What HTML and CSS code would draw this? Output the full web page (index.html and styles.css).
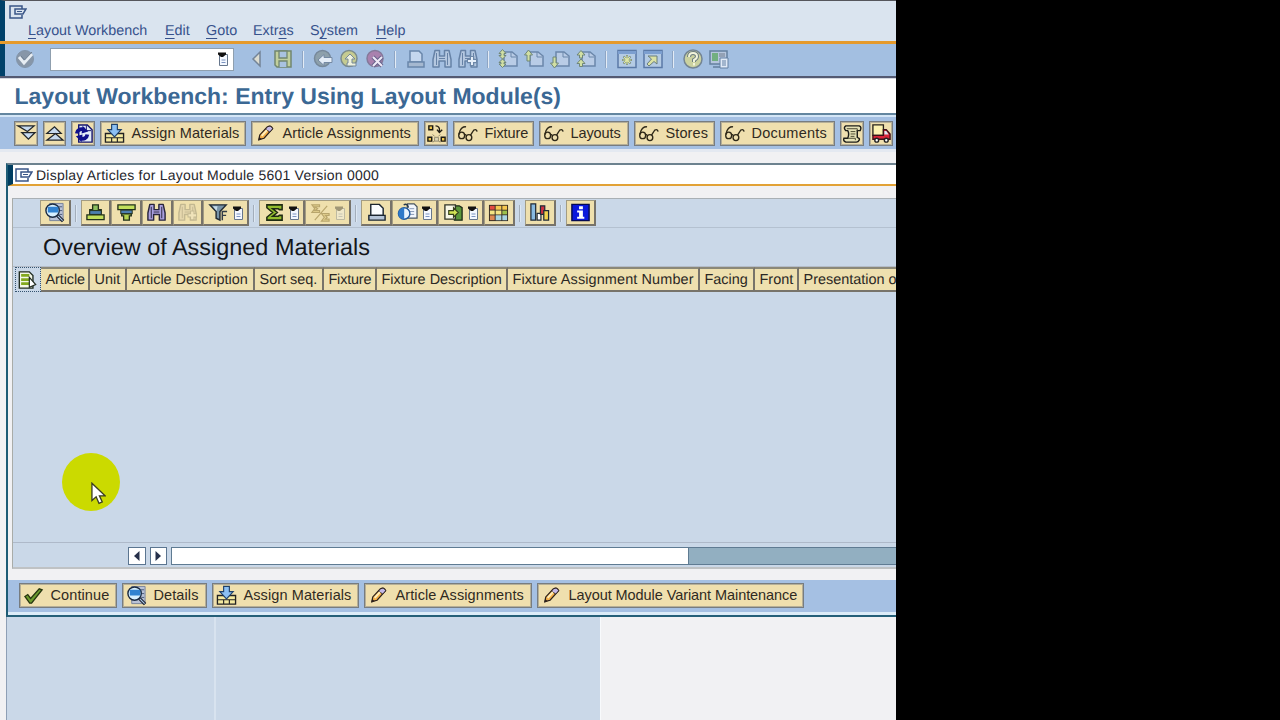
FILE: index.html
```html
<!DOCTYPE html>
<html lang="en">

<head>
    <meta charset="UTF-8">
    <meta name="viewport" content="width=device-width, initial-scale=1.0">
    <link rel="stylesheet" href="styles.css">
    <title>Layout Workbench</title>
</head>

<body>
    <!-- icons that are used more than once -->
    <svg class="defs">
        <symbol id="window" viewBox="0 0 18 14">
            <path d="M13 4V1H1v12h12v-3M6 4h11l-3 5H6z" fill="none" stroke="currentColor" stroke-width="1.5" />
            <path d="M8 6.5h5" stroke="currentColor" />
        </symbol>
        <symbol id="list" viewBox="0 0 12 14">
            <path d="M2.500 2.500h8v11h-8z" fill="#f4f8ff" stroke="#66768c" />
            <path d="M4.500 8h4M4.500 10.500h4" stroke="#7b93c0" />
            <path d="M1 .5h8v2L6 5H4L1 2.500z" fill="#111" />
        </symbol>
        <symbol id="assign" viewBox="0 0 22 22">
            <path d="M1.500 11h19v9h-19z" fill="#f4e9a0" stroke="#222" stroke-width="1.400" />
            <path d="M2 15.500h18M8 15v5M14 15v5" stroke="#222" stroke-width="1.200" />
            <path d="M8 1.500h6V7h4l-7 7.500L4 7h4z" fill="#8cc0f4" stroke="#1e4069" stroke-width="1.200" />
        </symbol>
        <symbol id="pencil" viewBox="0 0 22 22">
            <path d="M4 17.500l1-5L13 4q4-2 5.500 2L9.500 16z" fill="#f5b04a" stroke="#2b211c" stroke-width="1.300" />
            <path d="M11 6.500L13 4q4-2 5.500 2l-3 3.500z" fill="#c3b8e8" stroke="#2b211c" />
            <path d="M7 13.500l5.500-6" stroke="#fff0bd" stroke-width="2" />
            <path d="M3.500 18.500l.8-4 2.700 2.500z" fill="#2b211c" />
        </symbol>
        <symbol id="glasses" viewBox="0 0 22 22">
            <g fill="none" stroke="#2e2818" stroke-width="1.400">
                <path d="M9.500 4Q5 3.500 3 8.500L2 12M21 9q-.5-3-3.500-1.500L14 13" />
                <ellipse cx="4.900" cy="13" rx="3.100" ry="3.400" />
                <ellipse cx="12.500" cy="15.300" rx="3" ry="3.200" />
                <path d="M7.500 12q1.500-.5 2.500 1.500" />
            </g>
        </symbol>
        <symbol id="magnify" viewBox="0 0 22 22">
            <path d="M6 1.500h14v18H6z" fill="#b9c2d6" stroke="#77829a" />
            <path d="M15 5h4M16 9h3M16 13h3" stroke="#4a5a7a" />
            <circle cx="9" cy="9" r="7" fill="#d6efff" stroke="#1b2b42" stroke-width="1.500" />
            <path d="M4 5h11v6H4z" fill="#3182d0" />
            <path d="M14 14l6 6" stroke="#1b2030" stroke-width="3.500" />
            <path d="M14.500 14.500l5 5" stroke="#a9c9e9" stroke-width="1.200" />
        </symbol>
        <symbol id="binoculars" viewBox="0 0 22 22">
            <path d="M4 2.500h4.500V8h5V2.500H18l2 9V19h-6v-6H8v6H2v-7.500z" fill="var(--fill)" stroke="var(--line)" stroke-width="1.500" stroke-linejoin="round" />
            <path d="M5.500 5v12M16.500 5v12M8 10.500h6" stroke="var(--line)" />
        </symbol>
        <symbol id="page" viewBox="0 0 22 22">
            <path d="M7 4h8l5 4v10H7z" fill="#b9cce6" stroke="#6b87aa" stroke-width="1.500" />
            <path d="M14 4v5h5" fill="none" stroke="#6b87aa" />
        </symbol>
    </svg>

    <div class="app">
        <div class="menu">
            <svg class="window-icon"><use href="#window" /></svg>
            <div class="menu-items">
                <span class="m1"><u>L</u>ayout Workbench</span>
                <span class="m2"><u>E</u>dit</span>
                <span class="m3"><u>G</u>oto</span>
                <span class="m4">Extr<u>a</u>s</span>
                <span class="m5">S<u>y</u>stem</span>
                <span><u>H</u>elp</span>
            </div>
        </div>

        <div class="standard">
            <svg class="ok" viewBox="0 0 22 22">
                <circle cx="11" cy="11" r="8.500" fill="#8796a8" stroke="#8294a9" />
                <path d="M5 9l5 6 8-9" fill="none" stroke="#e7edf3" stroke-width="3" />
                <path d="M7 8l3.500 4L18 4" fill="none" stroke="#6e7e90" />
            </svg>
            <div class="command"><svg class="list"><use href="#list" /></svg></div>
            <svg class="std" viewBox="0 0 22 22">
                <path d="M14 4v14L7 11z" fill="#dcdcd0" stroke="#748497" stroke-width="1.500" />
            </svg>
            <svg class="std" viewBox="0 0 22 22">
                <path d="M3 3h16v16H5l-2-2z" fill="#c1cf9c" stroke="#72876f" stroke-width="1.500" />
                <path d="M7 3h8v7H7zM7 19v-6h8v6" fill="#a9c2e0" stroke="#72876f" stroke-width="1.300" />
            </svg>
            <i class="sep"></i>
            <svg class="std" viewBox="0 0 22 22">
                <circle cx="10.500" cy="10.500" r="8" fill="#8da0ab" stroke="#76889a" stroke-width="1.500" />
                <path d="M6 12l6-5.500v3h8v5h-8v3z" fill="#e4edf7" stroke="#7489a3" />
            </svg>
            <svg class="std" viewBox="0 0 22 22">
                <circle cx="11" cy="10.500" r="8" fill="#c5cb91" stroke="#7b8b8b" stroke-width="1.500" />
                <path d="M7 11l5-5 5 5h-3v4h4v3H9v-3h1v-4z" fill="#eef1dc" stroke="#75889a" />
            </svg>
            <svg class="std" viewBox="0 0 22 22">
                <circle cx="11" cy="10.500" r="8" fill="#a981ae" stroke="#84799a" stroke-width="1.500" />
                <path d="M9 9l9 9M18 9l-9 9" stroke="#66628b" stroke-width="4" />
                <path d="M9 9l9 9M18 9l-9 9" stroke="#efe9f6" stroke-width="2" />
            </svg>
            <i class="sep"></i>
            <svg class="std" viewBox="0 0 22 22">
                <path d="M5 3h9l3 3v8H5z" fill="#c5d7ee" stroke="#6986aa" stroke-width="1.500" />
                <path d="M3 14h16v5H3z" fill="#a5b8d0" stroke="#6986aa" stroke-width="1.500" />
            </svg>
            <svg class="std find"><use href="#binoculars" /></svg>
            <svg class="std find" viewBox="0 0 22 22">
                <use href="#binoculars" />
                <path d="M15 8v10M10 13h10" stroke="#6c87a8" stroke-width="4.500" />
                <path d="M15 9v8M11 13h8" stroke="#e6eff9" stroke-width="2" />
            </svg>
            <i class="sep"></i>
            <svg class="std pages" viewBox="0 0 22 22">
                <use href="#page" />
                <path d="M5.500 1.500l3.500 4H7v2h2l-3.500 3.500L2 7.500h2v-2H2zM5.500 11l3.500 3.500H7v1.500h2l-3.500 3.500L2 16h2v-1.500H2z" />
            </svg>
            <svg class="std pages" viewBox="0 0 22 22">
                <use href="#page" />
                <path d="M5.500 2l4 5h-2.500v6h-3V7H1.500z" />
            </svg>
            <svg class="std pages" viewBox="0 0 22 22">
                <use href="#page" />
                <path d="M5.500 20l4-5h-2.500V9h-3v6H1.500z" />
            </svg>
            <svg class="std pages" viewBox="0 0 22 22">
                <use href="#page" />
                <path d="M6 2.500l4 4.500H7.500v3h-3V7H2zM6 11l4 4.500H7.500v3h-3v-3H2z" />
            </svg>
            <i class="sep"></i>
            <svg class="std" viewBox="0 0 22 22">
                <path d="M2 2.500h18v17H2z" fill="#b4cbe4" stroke="#5b7aa7" stroke-width="1.500" />
                <path d="M2 4.500h18" stroke="#7c9fd0" stroke-width="3" />
                <path d="M11 7v10M6 12h10M7.500 8.500l7 7M14.500 8.500l-7 7" stroke="#6c8075" stroke-width="2" />
                <path d="M11 7.500v9M6.500 12h9M8 9l6 6M14 9l-6 6" stroke="#e0e8a4" stroke-width="1.200" />
            </svg>
            <svg class="std" viewBox="0 0 22 22">
                <path d="M2 2.500h18v17H2z" fill="#b4cbe4" stroke="#5b7aa7" stroke-width="1.500" />
                <path d="M2 4.500h18" stroke="#7c9fd0" stroke-width="3" />
                <path d="M6 8h9v8l-3-2.500L7 18l-2-2 4.500-5z" fill="#dce2a4" stroke="#6b7e7c" />
            </svg>
            <i class="sep"></i>
            <svg class="std" viewBox="0 0 22 22">
                <circle cx="11" cy="11" r="9" fill="#cbd2a0" stroke="#748593" stroke-width="1.500" />
                <path d="M7 9q0-4 4-4t4 3.500q0 2-3 3.500v2" fill="none" stroke="#6c7d80" stroke-width="4" />
                <path d="M7 9q0-4 4-4t4 3.500q0 2-3 3.500v2M12 15v2.500" fill="none" stroke="#f2f4da" stroke-width="2" />
            </svg>
            <svg class="std" viewBox="0 0 22 22">
                <path d="M2 3h17v13H2zM5 19h9" fill="#b6c6dd" stroke="#64809f" stroke-width="1.500" />
                <path d="M4 5h6v8H4z" fill="#72af80" />
                <path d="M11 5h6v4h-6z" fill="#93a1b5" />
                <path d="M12 10h8v10h-8z" fill="#dfe9f6" stroke="#6581a4" />
                <path d="M14 13h4M14 15h4M14 17h4" stroke="#6581a4" />
            </svg>
        </div>

        <h1>Layout Workbench: Entry Using Layout Module(s)</h1>

        <div class="toolbar">
            <button class="btn square">
                <svg viewBox="0 0 22 22"><path d="M2 3h17l-7 6zM6 10h14l-7 7z" fill="#c6daf0" stroke="#22262a" stroke-width="1.300" /></svg>
            </button>
            <button class="btn square narrow">
                <svg viewBox="0 0 22 22"><path d="M3 11h15l-7-7zM3 18h17l-8-7z" fill="#c6daf0" stroke="#22262a" stroke-width="1.300" /></svg>
            </button>
            <button class="btn square">
                <svg viewBox="0 0 22 22">
                    <path d="M6 2h9l5 5v13H6z" fill="#e3ecf8" stroke="#17176f" stroke-width="1.500" />
                    <path d="M14 2.500V8h5" fill="none" stroke="#17176f" />
                    <path d="M4 11q1-6 8-4M15 12q-1 6-8 4" fill="none" stroke="#10108c" stroke-width="4" />
                    <path d="M10 3l6 6-7 2zM9 20l-6-6 7-2z" fill="#10108c" />
                </svg>
            </button>
            <button class="btn w146"><svg><use href="#assign" /></svg>Assign Materials</button>
            <button class="btn w168"><svg><use href="#pencil" /></svg>Article Assignments</button>
            <button class="btn square">
                <svg viewBox="0 0 22 22">
                    <path d="M3 3h4v4H3zM2 15h4v4H2zM16 15h4v4h-4z" fill="#f1c94d" stroke="#1d1a12" stroke-width="1.500" />
                    <path d="M9 15h4v4H9z" fill="#ddd6b5" stroke="#928b70" />
                    <path d="M7 12l2 2M15 12l-2 2M7 20l2-1M15 20l-2-1" stroke="#888164" />
                    <path d="M10 3q5 0 4 6M11.500 7l2.500 3 3-3" fill="none" stroke="#1d1a12" stroke-width="1.400" />
                </svg>
            </button>
            <button class="btn tight w81"><svg><use href="#glasses" /></svg>Fixture</button>
            <button class="btn tight w90"><svg><use href="#glasses" /></svg>Layouts</button>
            <button class="btn w81"><svg><use href="#glasses" /></svg>Stores</button>
            <button class="btn w115"><svg><use href="#glasses" /></svg><span class="wide">Documents</span></button>
            <button class="btn square">
                <svg viewBox="0 0 22 22">
                    <path d="M4 3h14q3 1 1 5h-3v7q3 1 2 3-1 2-3 2H4q-3-1-2-4h4q2-5 0-8H4q-3-3 0-5z" fill="#e6e2b7" stroke="#1c1c18" stroke-width="1.500" />
                    <path d="M5 6h11v2M6 16h8v2M9 9h5M9 11.500h5M9 14h4" fill="none" stroke="#47452f" />
                </svg>
            </button>
            <button class="btn square">
                <svg viewBox="0 0 22 22">
                    <path d="M2 2h11v11H2z" fill="#fcf2b2" stroke="#26221b" stroke-width="1.400" />
                    <path d="M13 7h3l4 4.500V17H2v-4h11z" fill="#d92439" stroke="#3c1118" stroke-width="1.400" />
                    <path d="M14 8.500h2l2.500 3.500H14z" fill="#dce9f5" />
                    <circle cx="6" cy="18" r="2" fill="#fff" stroke="#222" stroke-width="1.500" />
                    <circle cx="16" cy="18" r="2" fill="#fff" stroke="#222" stroke-width="1.500" />
                </svg>
            </button>
        </div>

        <div class="dialog">
            <div class="dialog-title">
                <svg class="window-icon"><use href="#window" /></svg>
                <span>Display Articles for Layout Module 5601 Version 0000</span>
            </div>

            <div class="grid">
                <div class="grid-tools">
                    <button class="tool"><svg><use href="#magnify" /></svg></button>
                    <i class="sep"></i>
                    <button class="tool">
                        <svg viewBox="0 0 22 22">
                            <path d="M8 3h6v5h3v5H5V8h3z" fill="#8cbf5e" stroke="#22301c" stroke-width="1.400" />
                            <path d="M5 9h12v4H5z" fill="#4d7fb0" stroke="#22301c" />
                            <path d="M2 13.500h18v5H2z" fill="#c2df5b" stroke="#22301c" stroke-width="1.400" />
                        </svg>
                    </button>
                    <button class="tool">
                        <svg viewBox="0 0 22 22">
                            <path d="M2 3h18v5H2z" fill="#c2df5b" stroke="#22301c" stroke-width="1.400" />
                            <path d="M5 8.500h12v4H5z" fill="#4d7fb0" stroke="#22301c" />
                            <path d="M6 12.500h10v2h-2V19H8v-4.500H6z" fill="#b3d450" stroke="#22301c" stroke-width="1.400" />
                        </svg>
                    </button>
                    <button class="tool"><svg class="find-on"><use href="#binoculars" /></svg></button>
                    <button class="tool">
                        <svg class="find-off" viewBox="0 0 22 22">
                            <use href="#binoculars" />
                            <path d="M16 9v10M11 14h10" stroke="#c3b891" stroke-width="4.500" />
                            <path d="M16 10v8M12 14h8" stroke="#f0e3ba" stroke-width="2.500" />
                        </svg>
                    </button>
                    <button class="tool drop">
                        <svg viewBox="0 0 22 22">
                            <path d="M2 3h17l-6.500 7v9l-4-2v-7z" fill="#7894a8" stroke="#222b35" stroke-width="1.500" />
                            <path d="M5 4.500h5l-1 5" fill="#c7dcea" />
                            <path d="M15 19V10h5M15 14h4" fill="none" stroke="#333e48" stroke-width="1.500" />
                        </svg>
                        <svg class="list"><use href="#list" /></svg>
                    </button>
                    <i class="sep"></i>
                    <button class="tool drop">
                        <svg viewBox="0 0 22 22"><path d="M3 3h16v5h-3l-1-1H9l5 4-5 4h6l1-1h3v5H3v-3l6-5-6-5z" fill="#93bd2e" stroke="#1f2b12" stroke-width="1.600" /></svg>
                        <svg class="list"><use href="#list" /></svg>
                    </button>
                    <button class="tool drop off">
                        <svg viewBox="0 0 22 22"><path d="M2 3h8v2H5l3 2-3 2h5v2H2l3-4zM12 12h8v2h-4l2 2-2 2h4v2h-8l3-4zM5 19L18 4" fill="#e8d693" stroke="#b8a56c" stroke-width="1.200" /></svg>
                        <svg class="list"><use href="#list" /></svg>
                    </button>
                    <i class="sep"></i>
                    <button class="tool">
                        <svg viewBox="0 0 22 22">
                            <path d="M5 2.500h9l4 4V14H5z" fill="#fafdff" stroke="#1b2630" stroke-width="1.500" />
                            <path d="M3 14h17v5H3z" fill="#b5c5d8" stroke="#1b2630" stroke-width="1.500" />
                        </svg>
                    </button>
                    <button class="tool drop">
                        <svg viewBox="0 0 22 22">
                            <path d="M11 2h7l3 3v12H10z" fill="#f1f6fc" stroke="#4a5662" stroke-width="1.300" />
                            <path d="M13 7h5M13 10h5M13 13h5" stroke="#8496b5" />
                            <circle cx="7.500" cy="12" r="6" fill="#e9f5ff" stroke="#225a9d" stroke-width="1.500" />
                            <path d="M7.500 6a6 6 0 0 0 0 12z" fill="#2f7ac9" />
                            <path d="M7 3q4-2 5 3" fill="none" stroke="#26384a" stroke-width="1.500" />
                        </svg>
                        <svg class="list"><use href="#list" /></svg>
                    </button>
                    <button class="tool drop">
                        <svg viewBox="0 0 22 22">
                            <path d="M12 4h5l3 2v13h-8z" fill="#5a973b" stroke="#1c2b18" stroke-width="1.400" />
                            <path d="M2 3h11v15H2z" fill="#f7f7e7" stroke="#303427" stroke-width="1.400" />
                            <path d="M6 9h5V6l5 5-5 5v-3H6z" fill="#d2e255" stroke="#35401b" stroke-width="1.200" />
                        </svg>
                        <svg class="list"><use href="#list" /></svg>
                    </button>
                    <button class="tool">
                        <svg viewBox="0 0 22 22">
                            <path d="M1 3h20v17H1z" fill="#332b23" />
                            <path d="M2 4h5v4H2z" fill="#e34a42" />
                            <path d="M8 4h6v4H8zM15 4h5v4h-5z" fill="#f6c851" />
                            <path d="M2 9h5v4H2zM8 9h6v4H8z" fill="#f4e583" />
                            <path d="M15 9h5v4h-5z" fill="#9bc04b" />
                            <path d="M2 14h5v5H2z" fill="#dd8a53" />
                            <path d="M8 14h6v5H8zM15 14h5v5h-5z" fill="#a8d5e1" />
                        </svg>
                    </button>
                    <i class="sep"></i>
                    <button class="tool">
                        <svg viewBox="0 0 22 22">
                            <path d="M2 2h5v17H2z" fill="#87b9e0" stroke="#1f2b38" stroke-width="1.300" />
                            <path d="M8.500 12h4v7h-4z" fill="#fff" stroke="#1f2b38" stroke-width="1.300" />
                            <path d="M12 4h4.500v9H12z" fill="#cc3040" stroke="#1f2b38" stroke-width="1.300" />
                            <path d="M15.500 9h5v10h-5z" fill="#f2d34d" stroke="#1f2b38" stroke-width="1.300" />
                        </svg>
                    </button>
                    <i class="sep"></i>
                    <button class="tool">
                        <svg viewBox="0 0 22 22">
                            <path d="M2 2.500h18v17H2z" fill="#0b18dc" stroke="#050a52" stroke-width="1.500" />
                            <path d="M9.500 4.500h4v3h-4zM7.500 9h6v6.500H15v2H7.500v-2h2V11h-2z" fill="#fff" />
                        </svg>
                    </button>
                </div>

                <h2>Overview of Assigned Materials</h2>

                <div class="columns">
                    <div class="select-all">
                        <svg viewBox="0 0 22 22">
                            <path d="M2 2h11l4 4v14H2z" fill="#f4f8e8" stroke="#222c22" stroke-width="1.500" />
                            <path d="M4 6h9M4 10.500h10M4 15h10" stroke="#82a91f" stroke-width="3" />
                            <path d="M13 8v11l7-3z" fill="#fff" stroke="#222c22" stroke-width="1.300" />
                        </svg>
                    </div>
                    <div class="col c1">Article</div>
                    <div class="col c2">Unit</div>
                    <div class="col c3">Article Description</div>
                    <div class="col c4">Sort seq.</div>
                    <div class="col c5">Fixture</div>
                    <div class="col c6">Fixture Description</div>
                    <div class="col c7">Fixture Assignment Number</div>
                    <div class="col c8">Facing</div>
                    <div class="col c9">Front</div>
                    <div class="col c10">Presentation o</div>
                </div>

                <div class="rows"></div>

                <div class="scroll">
                    <div class="arrow"><svg viewBox="0 0 8 10"><path d="M6.500 0v10L1 5z" /></svg></div>
                    <div class="arrow"><svg viewBox="0 0 8 10"><path d="M1.500 0v10L7 5z" /></svg></div>
                    <div class="track"><div class="thumb"></div></div>
                </div>
            </div>

            <div class="actions">
                <button class="btn w98">
                    <svg viewBox="0 0 22 22"><path d="M2 12l3-2 3 4 9-10 3 1L9 19H7z" fill="#6c9c2f" stroke="#26350f" stroke-width="1.400" /></svg>Continue
                </button>
                <button class="btn w85"><svg><use href="#magnify" /></svg>Details</button>
                <button class="btn w147"><svg><use href="#assign" /></svg>Assign Materials</button>
                <button class="btn w168"><svg><use href="#pencil" /></svg>Article Assignments</button>
                <button class="btn w267"><svg><use href="#pencil" /></svg>Layout Module Variant Maintenance</button>
            </div>
        </div>

        <div class="behind">
            <div class="tree"></div>
            <div class="detail"></div>
        </div>

        <div class="pointer">
            <svg viewBox="0 0 16 24"><path d="M1 1v18.500l4.500-4 3 7 3.500-1.500-3-6.500h6z" fill="#fff" stroke="#3b3f22" stroke-width="1.400" /></svg>
        </div>
    </div>
</body>

</html>
```

FILE: styles.css
```css
* {
    margin: 0;
    padding: 0;
    box-sizing: border-box;
}

body {
    background: #000;
    height: 720px;
    overflow: hidden;
    font-family: "Liberation Sans", Arial, sans-serif;
    font-size: 14.5px;
    color: #2b2824;
    text-rendering: geometricPrecision;
}

svg {
    display: block;
    flex: none;
}

.defs {
    display: none;
}

.app {
    position: relative;
    display: flex;
    flex-direction: column;
    width: 896px;
    height: 720px;
    overflow: hidden;
    background: #f1f1f3;
    white-space: nowrap;
}

/* menu bar */

.menu {
    height: 41px;
    padding: 4px 0 0 4px;
    border-top: 1px solid #55565c;
    border-left: 5px solid #00416a;
    background: #dae4ef;
    color: #37528c;
}

.window-icon {
    width: 18px;
    height: 14px;
    color: #3a5688;
}

.menu-items {
    display: flex;
    padding-left: 19px;
    font-size: 14.35px;
    line-height: 24px;
}

.menu-items u {
    text-underline-offset: 3px;
}

.m1 {
    width: 137px;
}

.m2 {
    width: 41px;
}

.m3 {
    width: 47px;
}

.m4 {
    width: 57px;
}

.m5 {
    width: 66px;
}

/* standard toolbar */

.standard {
    display: flex;
    align-items: center;
    height: 37px;
    padding-bottom: 2px;
    border-top: 3px solid #e59a2c;
    border-bottom: 2px solid #545a72;
    background: linear-gradient(90deg, #00416a 5px, #a3bfe1 5px);
}

.ok {
    width: 22px;
    height: 22px;
    margin: 0 14px 0 14px;
}

.command {
    display: flex;
    align-items: center;
    justify-content: flex-end;
    width: 184px;
    height: 23px;
    margin-right: 9.5px;
    padding-right: 4px;
    border: 1px solid #8f9fae;
    background: #fff;
}

.list {
    width: 12px;
    height: 14px;
}

.std {
    width: 22px;
    height: 22px;
    margin: 0 2px;
}

.find {
    --fill: #b5c8e0;
    --line: #6682a6;
}

.pages > path {
    fill: #d1dfa3;
    stroke: #6f8679;
}

.sep {
    flex: none;
    width: 2px;
    height: 17px;
    margin: 0 6px;
    background: #e3ebf5;
    border-left: 1px solid #8ea5c4;
}

.standard .sep {
    margin-right: 6.5px;
}

h1 {
    height: 37px;
    padding-left: 14.5px;
    border-top: 1px solid #d5d8e0;
    border-bottom: 2px solid #6386a0;
    background: #fff;
    color: #3b6894;
    font-size: 23px;
    line-height: 34px;
}

/* application toolbar */

.toolbar {
    display: flex;
    gap: 5px;
    height: 37px;
    padding: 4px 0 0 14px;
    border-top: 2px solid #d4e6f7;
    border-bottom: 3px solid #e4e9f1;
    background: #a5c0e3;
}

.btn {
    display: flex;
    flex: none;
    align-items: center;
    gap: 7px;
    height: 25px;
    padding: 0 0 1px 2.5px;
    border: 1px solid #777c80;
    box-shadow: inset 0 0 0 1px #b5af98;
    background: #efdfae;
    color: #2f2a22;
    font: inherit;
    letter-spacing: 0.1px;
}

.btn svg {
    width: 21px;
    height: 21px;
}

.square {
    justify-content: center;
    width: 24px;
    padding-left: 0;
}

.narrow {
    width: 23px;
}

.tight {
    letter-spacing: -0.1px;
}

.wide {
    letter-spacing: 0.25px;
}

.w81 {
    width: 81px;
}

.w85 {
    width: 85px;
}

.w90 {
    width: 90px;
}

.w98 {
    width: 98px;
}

.w115 {
    width: 115px;
}

.w146 {
    width: 146px;
}

.w147 {
    width: 147px;
}

.w168 {
    width: 168px;
}

.w267 {
    width: 267px;
    letter-spacing: -0.07px;
}

/* dialog */

.dialog {
    display: flex;
    flex-direction: column;
    height: 454px;
    margin: 11px 0 0 6px;
    border-top: 2px solid #6d828f;
    border-bottom: 2px solid #245f78;
    border-left: 2px solid #1d5c76;
}

.dialog-title {
    display: flex;
    align-items: center;
    gap: 3px;
    height: 21px;
    padding-left: 2px;
    border-bottom: 2px solid #e2a236;
    border-left: 5px solid #003d60;
    background: #fff;
    font-size: 14px;
    letter-spacing: 0.22px;
    color: #26262c;
}

.grid {
    display: flex;
    flex-direction: column;
    height: 371px;
    margin: 12px 0 0 4px;
    border-top: 1px solid #a9b0b5;
    border-bottom: 2px solid #bfc2c4;
    border-left: 1px solid #a9aca8;
    background: #cad8e8;
}

.grid-tools {
    display: flex;
    height: 29px;
    padding: 1px 0 0 27px;
    border-bottom: 1px solid #b4c1d0;
}

.tool {
    display: flex;
    flex: none;
    align-items: center;
    justify-content: center;
    width: 30.7px;
    height: 26px;
    border: 1px solid #a39c82;
    border-right: 2px solid #77736a;
    border-bottom: 2px solid #77736a;
    background: #efe0ad;
}

.tool svg {
    width: 21px;
    height: 21px;
}

.tool .list {
    width: 12px;
    height: 14px;
}

.drop {
    justify-content: space-between;
    width: 46px;
    padding: 0 3px 0 3.5px;
}

.off .list {
    opacity: 0.35;
}

.find-on {
    --fill: #aaa0df;
    --line: #29263d;
}

.find-off {
    --fill: #e6d8ae;
    --line: #c3b891;
}

.grid-tools .sep {
    margin: 5px 4px 0;
    background: #dce7f3;
    border-color: #a3aebb;
}

h2 {
    height: 39px;
    padding-left: 30px;
    border-bottom: 1px solid #b4bcc8;
    color: #14161a;
    font-size: 23.45px;
    font-weight: normal;
    line-height: 38px;
}

.columns {
    display: flex;
    height: 25px;
    padding-left: 2px;
}

.select-all {
    flex: none;
    width: 26px;
    padding: 2px 1px;
    border: 1px dotted #34536f;
}

.select-all svg {
    width: 21px;
    height: 20px;
}

.col {
    flex: none;
    padding-left: 4.5px;
    border-top: 2px solid #8b8878;
    border-right: 2px solid #77736a;
    border-bottom: 2px solid #77736a;
    background: #eee0af;
    font-size: 14.45px;
    line-height: 23px;
}

.c1 {
    width: 49px;
    letter-spacing: -0.1px;
}

.c2 {
    width: 37px;
}

.c3 {
    width: 128px;
}

.c4 {
    width: 69px;
}

.c5 {
    width: 53px;
    letter-spacing: -0.2px;
}

.c6 {
    width: 131px;
}

.c7 {
    width: 192px;
    letter-spacing: 0.12px;
}

.c8 {
    width: 55px;
}

.c9 {
    width: 44px;
}

.c10 {
    width: 180px;
}

.rows {
    flex: 1;
}

.scroll {
    display: flex;
    gap: 4px;
    height: 25px;
    padding: 4px 0 0 115px;
    border-top: 1px solid #aeb9c9;
}

.arrow {
    display: flex;
    align-items: center;
    justify-content: center;
    width: 17.5px;
    height: 18px;
    border: 1px solid #5b7590;
    background: #fff;
    fill: #26304a;
}

.arrow svg {
    width: 8px;
    height: 10px;
}

.track {
    flex: 1;
    height: 18px;
    border: 1px solid #5f7b92;
    border-right: none;
    background: #92afc1;
}

.thumb {
    width: 517px;
    height: 16px;
    border-right: 1px solid #5f7b92;
    background: #fff;
}

.actions {
    display: flex;
    gap: 5px;
    height: 35px;
    margin-top: 11px;
    padding: 3px 0 0 11px;
    border-bottom: 3px solid #dcecf8;
    background: #a5c0e3;
}

/* screen behind the dialog */

.behind {
    display: flex;
    flex: 1;
    padding-left: 6px;
}

.tree {
    width: 595px;
    border-left: 1px solid #8e9fb5;
    border-right: 1px solid #f8fafc;
    background: linear-gradient(90deg, transparent 207px, #d8e3ef 207px, #d8e3ef 209px, transparent 209px) #cad8e8;
}

/* mouse pointer with its highlight */

.pointer {
    position: absolute;
    left: 62px;
    top: 453px;
    width: 58px;
    height: 58px;
    border-radius: 50%;
    background: #cbda00;
}

.pointer svg {
    width: 15px;
    height: 23px;
    margin: 29px 0 0 29px;
}
```
